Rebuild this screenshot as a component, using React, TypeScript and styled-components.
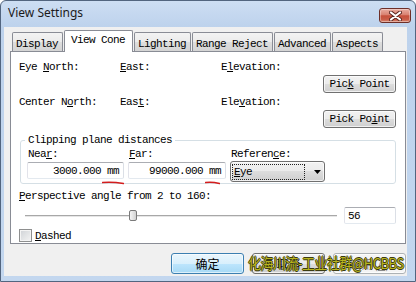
import React from "react";
import styled, { createGlobalStyle } from "styled-components";

const MONO = `"Liberation Mono", "Courier New", monospace`;
const CJK = `"Noto Sans CJK SC", "Noto Sans", sans-serif`;

const GlobalStyle = createGlobalStyle`
  html, body { margin: 0; padding: 0; }
  body { width: 416px; height: 282px; overflow: hidden; background: #fff; }
  * { box-sizing: border-box; }
`;

const Window = styled.div`
  position: relative;
  width: 416px;
  height: 282px;
  display: flex;
  flex-direction: column;
  border: 1px solid #52657f;
  border-radius: 6px 6px 0 0;
  background: linear-gradient(180deg, #cddef3 0px, #bdd2ec 26px, #c3d7ef 100%);
  overflow: hidden;
`;

const TitleBar = styled.div`
  flex: none;
  height: 26px;
  display: flex;
  align-items: flex-start;
  justify-content: space-between;
  padding: 0 4px 0 7px;
`;

const TitleText = styled.span`
  margin-top: 5px;
  font: 12px/14px "Noto Sans", sans-serif;
  color: #1b1b1b;
`;

const CloseButton = styled.div`
  margin-top: 7px;
  width: 32px;
  height: 15px;
  border: 1px solid #6e2f28;
  border-radius: 3px;
  background: linear-gradient(#e9ada1, #d98170 45%, #c6503b 52%, #c85c47 80%, #d98a74);
  box-shadow: inset 0 0 0 1px rgba(255, 255, 255, 0.35);
  display: flex;
  align-items: center;
  justify-content: center;
`;

const Client = styled.div`
  flex: 1;
  margin: 0 8px 5px 3px;
  background: #f0f0f0;
  display: flex;
  flex-direction: column;
  padding: 3px 1px 0 6px;
  font: 11px/12px ${MONO};
  letter-spacing: -0.6px;
  color: #000;
`;

const TabRow = styled.div`
  position: relative;
  z-index: 1;
  height: 22px;
  margin-bottom: -1px;
  padding-left: 2px;
  display: flex;
  align-items: flex-end;
  gap: 1px;
`;

const Tab = styled.div<{ $active?: boolean }>`
  height: ${(p) => (p.$active ? 22 : 19)}px;
  margin-bottom: ${(p) => (p.$active ? 0 : 1)}px;
  padding: ${(p) => (p.$active ? "3px 7px 0 6px" : "5px 4px 0 3px")};
  border: 1px solid #898c95;
  border-bottom: none;
  border-radius: 2px 2px 0 0;
  background: ${(p) =>
    p.$active ? "#ffffff" : "linear-gradient(#f3f3f3, #ebebeb 50%, #dedede 50%, #d4d4d4)"};
  white-space: pre;
`;

const Panel = styled.div`
  height: 193px;
  flex: none;
  border: 1px solid #898c95;
  background: #ffffff;
  padding: 9px 9px 0 8px;
  display: flex;
  flex-direction: column;
`;

const CoordGrid = styled.div<{ $gap?: number }>`
  display: grid;
  grid-template-columns: 101px 101px 1fr;
  height: 12px;
  margin-top: ${(p) => p.$gap ?? 0}px;
  white-space: pre;
`;

const Key = styled.u`
  text-decoration: underline;
  text-underline-offset: 1px;
`;

const ButtonRow = styled.div`
  display: flex;
  justify-content: flex-end;
  margin-top: 2px;
`;

const PushButton = styled.div`
  width: 73px;
  height: 18px;
  border: 1px solid #707070;
  border-radius: 3px;
  background: linear-gradient(#f2f2f2, #ebebeb 50%, #dddddd 50%, #cfcfcf);
  box-shadow: inset 0 0 0 1px rgba(255, 255, 255, 0.7);
  display: flex;
  align-items: center;
  justify-content: center;
  white-space: pre;
`;

const GroupBox = styled.fieldset`
  margin: 6px 0 0 1px;
  padding: 2px 6px 1px 6px;
  border: 1px solid #d5dfe5;
  border-radius: 3px;
  min-width: 0;
`;

const GroupLegend = styled.legend`
  margin-left: -2px;
  padding: 0 3px;
  line-height: 12px;
  white-space: pre;
`;

const FieldGrid = styled.div`
  display: grid;
  grid-template-columns: 97px 98px 95px;
  column-gap: 4px;
`;

const Field = styled.div`
  display: flex;
  flex-direction: column;
  gap: 2px;
`;

const FieldLabel = styled.div`
  height: 12px;
  padding-left: 1px;
  white-space: pre;
`;

const TextBox = styled.div<{ $align?: "left" | "right" }>`
  position: relative;
  height: 17px;
  border: 1px solid;
  border-color: #abadb3 #dbdfe6 #e3e9ef #e2e3ea;
  border-radius: 2px;
  background: #fff;
  display: flex;
  align-items: center;
  justify-content: ${(p) => (p.$align === "left" ? "flex-start" : "flex-end")};
  padding: ${(p) => (p.$align === "left" ? "0 0 0 3px" : "0 4px 0 0")};
  white-space: pre;
`;

const RedMark = styled.svg<{ $right: number }>`
  position: absolute;
  top: 18px;
  right: ${(p) => p.$right}px;
`;

const Combo = styled.div`
  height: 21px;
  margin-top: -1px;
  border: 1px solid #707070;
  border-radius: 3px;
  background: linear-gradient(#f2f2f2, #ebebeb 50%, #dddddd 50%, #cfcfcf);
  box-shadow: inset 0 0 0 1px rgba(255, 255, 255, 0.7);
  display: flex;
  align-items: center;
  padding: 0 3px 0 1px;
  gap: 9px;
`;

const ComboValue = styled.div`
  width: 74px;
  height: 16px;
  border: 1px dotted #222;
  padding-left: 1px;
  display: flex;
  align-items: center;
`;

const Caption = styled.div<{ $gap: number }>`
  height: 12px;
  margin-top: ${(p) => p.$gap}px;
  white-space: pre;
`;

const SliderRow = styled.div`
  display: flex;
  align-items: center;
  gap: 7px;
  height: 17px;
  margin-top: 5px;
  padding-left: 6px;
`;

const Track = styled.div`
  position: relative;
  flex: 1;
  height: 17px;
  display: flex;
  align-items: center;
`;

const Groove = styled.div`
  flex: 1;
  height: 2px;
  border-top: 1px solid #a8a8a8;
  border-bottom: 1px solid #e6e6e6;
  background: #d4d4d4;
`;

const Thumb = styled.div`
  position: absolute;
  top: 3px;
  width: 8px;
  height: 11px;
  border: 1px solid #7a7a7a;
  border-radius: 2px;
  background: linear-gradient(90deg, #f4f4f4, #e4e4e4 50%, #d2d2d2);
`;

const ValueBox = styled(TextBox)`
  width: 52px;
  flex: none;
`;

const CheckRow = styled.div`
  display: flex;
  align-items: center;
  gap: 3px;
  margin-top: 5px;
  height: 13px;
`;

const CheckBox = styled.div`
  width: 13px;
  height: 13px;
  border: 1px solid #8e8f8f;
  background: linear-gradient(135deg, #cfd2d6, #f4f4f4);
  box-shadow: inset 0 0 0 1px #f4f4f4;
`;

const DialogButtons = styled.div`
  display: flex;
  justify-content: flex-end;
  gap: 8px;
  margin-top: 9px;
`;

const DialogButton = styled.div<{ $variant?: "default" | "disabled" }>`
  width: 73px;
  height: 21px;
  border: 1px solid
    ${(p) => (p.$variant === "default" ? "#3c7fb1" : p.$variant === "disabled" ? "#adb2b5" : "#707070")};
  border-radius: 3px;
  background: ${(p) =>
    p.$variant === "default"
      ? "linear-gradient(#eaf6fd, #d9f0fc 50%, #bee6fd 50%, #a7d9f5)"
      : p.$variant === "disabled"
      ? "#f4f4f4"
      : "linear-gradient(#f2f2f2, #ebebeb 50%, #dddddd 50%, #cfcfcf)"};
  box-shadow: inset 0 0 0 1px
    ${(p) => (p.$variant === "default" ? "rgba(255,255,255,0.6)" : "rgba(255,255,255,0.7)")};
  color: ${(p) => (p.$variant === "disabled" ? "#8a8a8a" : "#000")};
  font: 12px/14px ${CJK};
  letter-spacing: 0;
  display: flex;
  align-items: center;
  justify-content: center;
`;

const Watermark = styled.div`
  position: absolute;
  left: 247px;
  top: 253px;
  font: 13px/16px ${CJK};
  letter-spacing: -0.5px;
  color: #b9b41e;
  white-space: pre;
  transform: scaleY(1.15);
  transform-origin: left top;
  text-shadow: 0.7px 0 #3b3b12, -0.7px 0 #3b3b12, 0 0.7px #3b3b12, 0 -0.7px #3b3b12;
  pointer-events: none;
`;

const Mark = ({ width, right }: { width: number; right: number }) => (
  <RedMark $right={right} width={width} height={4} viewBox={`0 0 ${width} 4`}>
    <path
      d={`M0.5 1.6 Q ${width * 0.45} 0.6 ${width - 0.5} 2.6`}
      stroke="#d31d1d"
      strokeWidth={1.5}
      fill="none"
      strokeLinecap="round"
    />
  </RedMark>
);

const tabs = ["Display", "View Cone", "Lighting", "Range Reject", "Advanced", "Aspects"];

const angle = { min: 2, max: 160, value: 56 };

export default function App() {
  const ratio = (angle.value - angle.min) / (angle.max - angle.min);
  return (
    <>
      <GlobalStyle />
      <Window>
        <TitleBar>
          <TitleText>View Settings</TitleText>
          <CloseButton>
            <svg width="13" height="10" viewBox="0 0 13 10">
              <path d="M2 1.5 L11 8.5 M11 1.5 L2 8.5" stroke="#5a2620" strokeWidth="4" strokeLinecap="round" />
              <path d="M2 1.5 L11 8.5 M11 1.5 L2 8.5" stroke="#ffffff" strokeWidth="2.2" strokeLinecap="round" />
            </svg>
          </CloseButton>
        </TitleBar>
        <Client>
          <TabRow>
            {tabs.map((t) => (
              <Tab key={t} $active={t === "View Cone"}>
                {t}
              </Tab>
            ))}
          </TabRow>
          <Panel>
            <CoordGrid>
              <span>
                Eye <Key>N</Key>orth:
              </span>
              <span>
                <Key>E</Key>ast:
              </span>
              <span>
                E<Key>l</Key>evation:
              </span>
            </CoordGrid>
            <ButtonRow>
              <PushButton>
                Pic<Key>k</Key> Point
              </PushButton>
            </ButtonRow>
            <CoordGrid $gap={3}>
              <span>
                Center N<Key>o</Key>rth:
              </span>
              <span>
                Eas<Key>t</Key>:
              </span>
              <span>
                Ele<Key>v</Key>ation:
              </span>
            </CoordGrid>
            <ButtonRow>
              <PushButton>
                Pick Po<Key>i</Key>nt
              </PushButton>
            </ButtonRow>
            <GroupBox>
              <GroupLegend>Clipping plane distances</GroupLegend>
              <FieldGrid>
                <Field>
                  <FieldLabel>
                    Nea<Key>r</Key>:
                  </FieldLabel>
                  <TextBox>
                    3000.000 mm
                    <Mark width={22} right={-1} />
                  </TextBox>
                </Field>
                <Field>
                  <FieldLabel>
                    <Key>F</Key>ar:
                  </FieldLabel>
                  <TextBox>
                    99000.000 mm
                    <Mark width={15} right={5} />
                  </TextBox>
                </Field>
                <Field>
                  <FieldLabel>
                    Referen<Key>c</Key>e:
                  </FieldLabel>
                  <Combo>
                    <ComboValue>
                      <Key>E</Key>ye
                    </ComboValue>
                    <svg width="7" height="4" viewBox="0 0 7 4">
                      <path d="M0 0 H7 L3.5 4 Z" fill="#000" />
                    </svg>
                  </Combo>
                </Field>
              </FieldGrid>
            </GroupBox>
            <Caption $gap={6}>
              <Key>P</Key>erspective angle from 2 to 160:
            </Caption>
            <SliderRow>
              <Track>
                <Groove />
                <Thumb style={{ left: `calc((100% - 8px) * ${ratio})` }} />
              </Track>
              <ValueBox $align="left">{angle.value}</ValueBox>
            </SliderRow>
            <CheckRow>
              <CheckBox />
              <span>
                <Key>D</Key>ashed
              </span>
            </CheckRow>
          </Panel>
          <DialogButtons>
            <DialogButton $variant="default">确定</DialogButton>
            <DialogButton>取消</DialogButton>
            <DialogButton $variant="disabled">
              应用(<Key>A</Key>)
            </DialogButton>
          </DialogButtons>
        </Client>
        <Watermark>化海川流-工业社群@HCBBS</Watermark>
      </Window>
    </>
  );
}
